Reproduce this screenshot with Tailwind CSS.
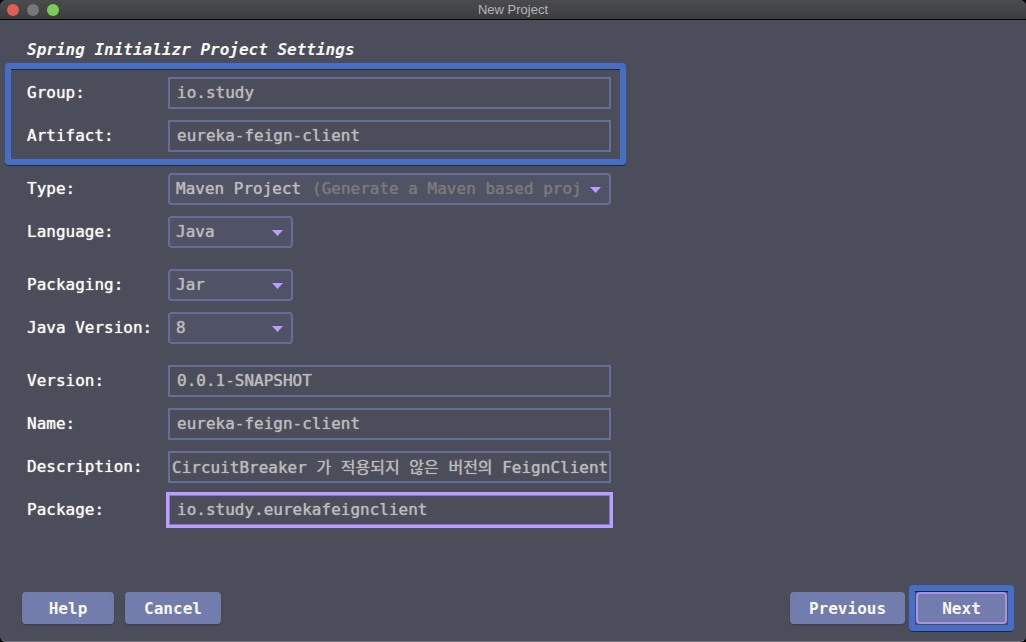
<!DOCTYPE html>
<html lang="en">
<head>
<meta charset="utf-8">
<meta name="viewport" content="width=device-width, initial-scale=1">
<title>New Project</title>
<script src="https://cdn.jsdelivr.net/npm/@tailwindcss/browser@4"></script>
</head>
<body class="bg-black">
<div class="flex min-h-screen flex-col overflow-hidden rounded-md border-b border-[#74757f] bg-[#4c4d5a] font-['DejaVu_Sans_Mono','Noto_Sans_CJK_KR',monospace] text-base text-[#f8f8f2]">

  <header class="grid h-5 grid-cols-[1fr_auto_1fr] items-center border-b border-black bg-linear-to-b from-[#4a4b4d] to-[#3c3d3f] px-[7px]">
    <div class="flex gap-2">
      <button type="button" aria-label="Close" class="size-3 rounded-full bg-[#df5f57]"></button>
      <button type="button" aria-label="Minimize" class="size-3 rounded-full bg-[#77777a]"></button>
      <button type="button" aria-label="Zoom" class="size-3 rounded-full bg-[#7bcd56]"></button>
    </div>
    <h1 class="font-['Liberation_Sans',sans-serif] text-[13px] leading-4 text-[#b4b5b7]">New Project</h1>
  </header>

  <form id="settings" class="flex w-full max-w-[631px] flex-col px-[5px] text-shadow-[0_0_1px_currentColor] [&_input]:text-shadow-[0_0_1px_currentColor] [&_select]:text-shadow-[0_0_1px_currentColor]">
    <h2 class="px-[22px] pt-[18px] pb-px leading-6 font-bold italic text-shadow-none">Spring Initializr Project Settings</h2>

    <div class="flex flex-col gap-[11px] rounded-sm border-6 border-[#466ec6] pt-2 pr-[9px] pb-[7px] pl-4 shadow-[0_1px_0_#22283c,inset_0_1px_0_#22283c]">
      <div class="grid grid-cols-[141px_1fr] items-center">
        <label for="group">Group:</label>
        <input id="group" value="io.study" class="h-8 w-full min-w-0 border-2 border-[#666d98] bg-transparent px-[7px] pb-[2px] text-[#bbbbbb] outline-none">
      </div>
      <div class="grid grid-cols-[141px_1fr] items-center">
        <label for="artifact">Artifact:</label>
        <input id="artifact" value="eureka-feign-client" class="h-8 w-full min-w-0 border-2 border-[#666d98] bg-transparent px-[7px] pb-[2px] text-[#bbbbbb] outline-none">
      </div>
    </div>

    <div class="mt-2 flex flex-col gap-[11px] pr-[15px] pl-[22px]">
      <div class="grid grid-cols-[141px_1fr] items-center">
        <label for="type">Type:</label>
        <div class="relative">
          <select id="type" class="block h-8 w-full appearance-none rounded-sm border-2 border-[#666d98] bg-[#505265] px-[6px] text-[#bbbbbb] outline-none">
            <option>Maven Project</option>
          </select>
          <span class="pointer-events-none absolute inset-y-0 right-7 left-36 flex items-center overflow-hidden whitespace-nowrap text-[#7a7a7c]">(Generate a Maven based proj</span>
          <svg class="pointer-events-none absolute top-[14px] right-[10px] h-[6px] w-[11px] fill-[#bd9dff]" viewBox="0 0 11 6"><path d="M0 0H11L5.5 6Z"/></svg>
        </div>
      </div>
      <div class="grid grid-cols-[141px_1fr] items-center">
        <label for="language">Language:</label>
        <div class="relative w-[125px]">
          <select id="language" class="block h-8 w-full appearance-none rounded-sm border-2 border-[#666d98] bg-[#505265] px-[6px] text-[#bbbbbb] outline-none">
            <option>Java</option>
          </select>
          <svg class="pointer-events-none absolute top-[14px] right-[10px] h-[6px] w-[11px] fill-[#bd9dff]" viewBox="0 0 11 6"><path d="M0 0H11L5.5 6Z"/></svg>
        </div>
      </div>
    </div>

    <div class="mt-[21px] flex flex-col gap-[11px] pr-[15px] pl-[22px]">
      <div class="grid grid-cols-[141px_1fr] items-center">
        <label for="packaging">Packaging:</label>
        <div class="relative w-[125px]">
          <select id="packaging" class="block h-8 w-full appearance-none rounded-sm border-2 border-[#666d98] bg-[#505265] px-[6px] text-[#bbbbbb] outline-none">
            <option>Jar</option>
          </select>
          <svg class="pointer-events-none absolute top-[14px] right-[10px] h-[6px] w-[11px] fill-[#bd9dff]" viewBox="0 0 11 6"><path d="M0 0H11L5.5 6Z"/></svg>
        </div>
      </div>
      <div class="grid grid-cols-[141px_1fr] items-center">
        <label for="java">Java Version:</label>
        <div class="relative w-[125px]">
          <select id="java" class="block h-8 w-full appearance-none rounded-sm border-2 border-[#666d98] bg-[#505265] px-[6px] text-[#bbbbbb] outline-none">
            <option>8</option>
          </select>
          <svg class="pointer-events-none absolute top-[14px] right-[10px] h-[6px] w-[11px] fill-[#bd9dff]" viewBox="0 0 11 6"><path d="M0 0H11L5.5 6Z"/></svg>
        </div>
      </div>
    </div>

    <div class="mt-[21px] flex flex-col gap-[11px] pr-[15px] pl-[22px]">
      <div class="grid grid-cols-[141px_1fr] items-center">
        <label for="version">Version:</label>
        <input id="version" value="0.0.1-SNAPSHOT" class="h-8 w-full min-w-0 border-2 border-[#666d98] bg-transparent px-[7px] pb-[2px] text-[#bbbbbb] outline-none">
      </div>
      <div class="grid grid-cols-[141px_1fr] items-center">
        <label for="name">Name:</label>
        <input id="name" value="eureka-feign-client" class="h-8 w-full min-w-0 border-2 border-[#666d98] bg-transparent px-[7px] pb-[2px] text-[#bbbbbb] outline-none">
      </div>
      <div class="grid grid-cols-[141px_1fr] items-center">
        <label for="description">Description:</label>
        <input id="description" value="CircuitBreaker 가 적용되지 않은 버전의 FeignClient" class="h-8 w-full min-w-0 border-2 border-[#666d98] bg-transparent px-[2px] pb-[2px] text-[#bbbbbb] outline-none">
      </div>
      <div class="grid grid-cols-[141px_1fr] items-center">
        <label for="package">Package:</label>
        <input id="package" value="io.study.eurekafeignclient" class="h-8 w-full min-w-0 border-2 border-[#8080b8] bg-transparent px-[7px] pb-[2px] text-[#bbbbbb] outline-3 -outline-offset-1 outline-[#bd9dff]">
      </div>
    </div>
  </form>

  <footer class="mt-auto flex items-center pr-3 pb-[10px] pl-[22px]">
    <button type="button" class="h-8 w-[92px] rounded-sm bg-[#727cad] pt-[2px] font-bold shadow-[0_1px_2px_#3c3d4a]">Help</button>
    <button type="button" class="ml-[11px] h-8 w-24 rounded-sm bg-[#727cad] pt-[2px] font-bold shadow-[0_1px_2px_#3c3d4a]">Cancel</button>
    <button type="button" class="mr-1 ml-auto h-8 w-[115px] rounded-sm bg-[#727cad] pt-[2px] font-bold shadow-[0_1px_2px_#3c3d4a]">Previous</button>
    <div class="rounded-sm border-6 border-[#466ec6] p-px shadow-[0_1px_0_#22283c,inset_0_1px_0_#22283c]">
      <button type="submit" form="settings" class="block h-8 w-[91px] rounded-sm border-2 border-[#a993e6] bg-[#727cad] pt-[2px] font-bold">Next</button>
    </div>
  </footer>
</div>
</body>
</html>
